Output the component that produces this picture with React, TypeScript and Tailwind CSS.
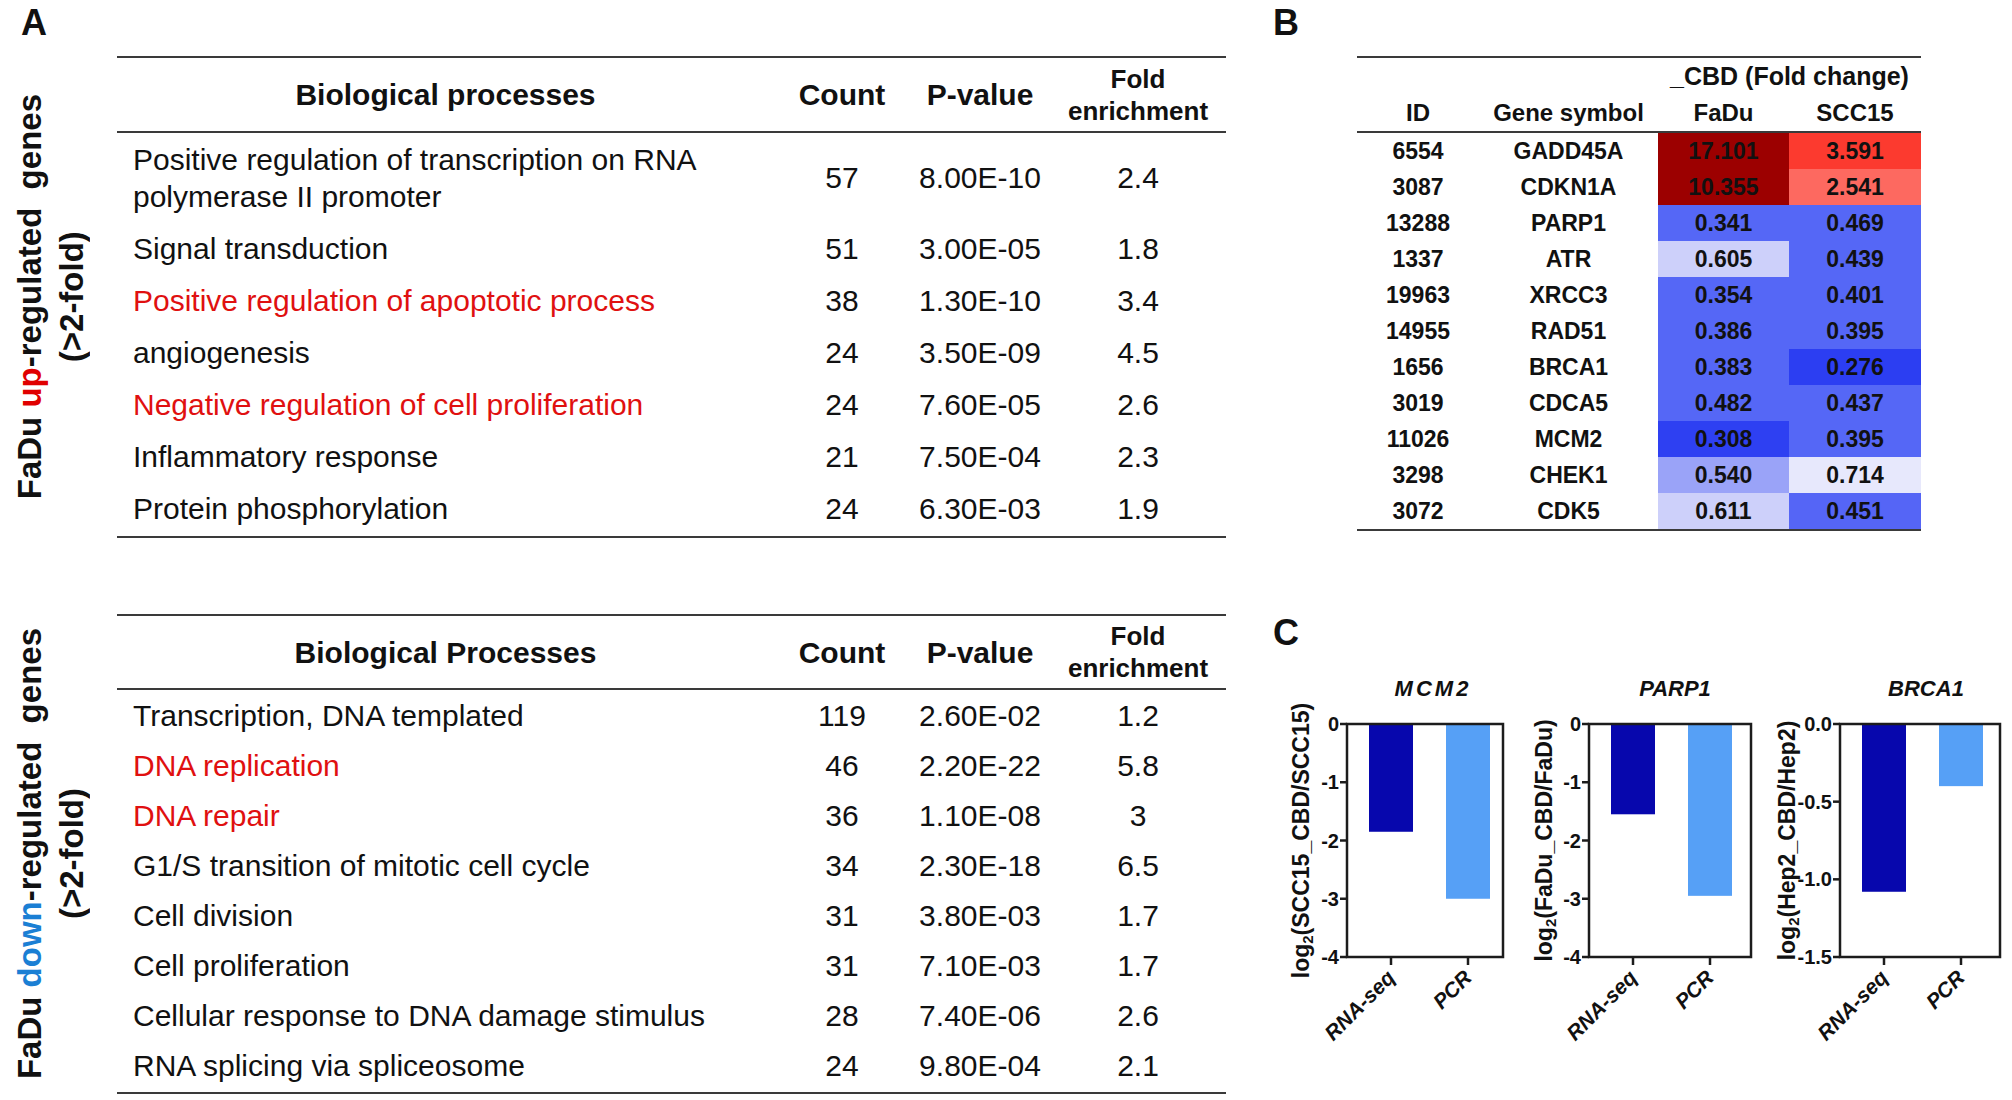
import React from "react";

type GoRow = { name: string[]; count: string; p: string; fold: string; red?: boolean };

const upRows: GoRow[] = [
  { name: ["Positive regulation of transcription on RNA", "polymerase II promoter"], count: "57", p: "8.00E-10", fold: "2.4" },
  { name: ["Signal transduction"], count: "51", p: "3.00E-05", fold: "1.8" },
  { name: ["Positive regulation of apoptotic process"], count: "38", p: "1.30E-10", fold: "3.4", red: true },
  { name: ["angiogenesis"], count: "24", p: "3.50E-09", fold: "4.5" },
  { name: ["Negative regulation of cell proliferation"], count: "24", p: "7.60E-05", fold: "2.6", red: true },
  { name: ["Inflammatory response"], count: "21", p: "7.50E-04", fold: "2.3" },
  { name: ["Protein phosphorylation"], count: "24", p: "6.30E-03", fold: "1.9" },
];

const downRows: GoRow[] = [
  { name: ["Transcription, DNA templated"], count: "119", p: "2.60E-02", fold: "1.2" },
  { name: ["DNA replication"], count: "46", p: "2.20E-22", fold: "5.8", red: true },
  { name: ["DNA repair"], count: "36", p: "1.10E-08", fold: "3", red: true },
  { name: ["G1/S transition of mitotic cell cycle"], count: "34", p: "2.30E-18", fold: "6.5" },
  { name: ["Cell division"], count: "31", p: "3.80E-03", fold: "1.7" },
  { name: ["Cell proliferation"], count: "31", p: "7.10E-03", fold: "1.7" },
  { name: ["Cellular response to DNA damage stimulus"], count: "28", p: "7.40E-06", fold: "2.6" },
  { name: ["RNA splicing via spliceosome"], count: "24", p: "9.80E-04", fold: "2.1" },
];

const heatRows = [
  ["6554", "GADD45A", "17.101", "bg-[#9c0000]", "3.591", "bg-[#fc3a2f]"],
  ["3087", "CDKN1A", "10.355", "bg-[#9c0000]", "2.541", "bg-[#fd6960]"],
  ["13288", "PARP1", "0.341", "bg-[#5567f6]", "0.469", "bg-[#5567f6]"],
  ["1337", "ATR", "0.605", "bg-[#cdd0fa]", "0.439", "bg-[#5567f6]"],
  ["19963", "XRCC3", "0.354", "bg-[#5567f6]", "0.401", "bg-[#5567f6]"],
  ["14955", "RAD51", "0.386", "bg-[#5567f6]", "0.395", "bg-[#5567f6]"],
  ["1656", "BRCA1", "0.383", "bg-[#5567f6]", "0.276", "bg-[#2c3ef2]"],
  ["3019", "CDCA5", "0.482", "bg-[#5567f6]", "0.437", "bg-[#5567f6]"],
  ["11026", "MCM2", "0.308", "bg-[#2e40f2]", "0.395", "bg-[#5567f6]"],
  ["3298", "CHEK1", "0.540", "bg-[#9aa3f8]", "0.714", "bg-[#e7e8fc]"],
  ["3072", "CDK5", "0.611", "bg-[#cdd0fa]", "0.451", "bg-[#5565f6]"],
];

function SideLabel({ word, color }: { word: string; color: string }) {
  return (
    <div className="w-[117px] flex items-center">
      <div className="ml-[9px] [writing-mode:vertical-rl] rotate-180 text-center text-[33px] leading-[42px] font-bold whitespace-pre">
        {"FaDu "}
        <span className={color}>{word}</span>
        {"-regulated  genes"}
        <br />
        {"(>2-fold)"}
      </div>
    </div>
  );
}

function GoTable({ title, rows, headH, rowH, firstH }: { title: string; rows: GoRow[]; headH: string; rowH: string; firstH: string }) {
  const cols = "grid grid-cols-[673px_104px_172px_144px_16px]";
  return (
    <div className="w-[1109px] border-y-2 border-[#3a3a3a]">
      <div className={`${cols} ${headH} border-b-2 border-[#3a3a3a] font-bold`}>
        <div className="flex items-center justify-center pr-[16px] text-[30px]">{title}</div>
        <div className="flex items-center justify-center text-[30px]">Count</div>
        <div className="flex items-center justify-center text-[30px]">P-value</div>
        <div className="flex flex-col items-center justify-center text-[26px] leading-[32px]">
          <span>Fold</span>
          <span>enrichment</span>
        </div>
      </div>
      {rows.map((r, i) => (
        <div key={i} className={`${cols} ${i === 0 ? firstH : rowH} text-[30px]`}>
          <div className={`flex flex-col justify-center pl-[16px] leading-[37px] ${r.red ? "text-[#e01010]" : ""}`}>
            {r.name.map((n) => (
              <span key={n}>{n}</span>
            ))}
          </div>
          <div className="flex items-center justify-center">{r.count}</div>
          <div className="flex items-center justify-center">{r.p}</div>
          <div className="flex items-center justify-center">{r.fold}</div>
        </div>
      ))}
    </div>
  );
}

type ChartProps = {
  x: number;
  w: number;
  title: string;
  spaced?: boolean;
  yLabel: string;
  labelX: number;
  ticks: [number, string][];
  min: number;
  values: number[];
};

function Chart({ x, w, title, spaced, yLabel, labelX, ticks, min, values }: ChartProps) {
  const T = 74;
  const B = 307;
  const H = B - T;
  const y = (v: number) => T + (v / min) * H;
  const bars = [
    { x: 22, c: "#0707ad", label: "RNA-seq" },
    { x: 99, c: "#56a0f6", label: "PCR" },
  ];
  return (
    <g transform={`translate(${x},0)`}>
      <text x={86} y={38} textAnchor="middle" dominantBaseline="central" fontSize={22} fontWeight={700} fontStyle="italic" letterSpacing={spaced ? 3 : 0}>
        {title}
      </text>
      {bars.map((b, i) => (
        <rect key={b.label} x={b.x} y={T} width={44} height={y(values[i]) - T} fill={b.c} />
      ))}
      <rect x={0} y={T} width={w} height={H} fill="none" stroke="#1c1c1c" strokeWidth={2.5} />
      {ticks.map(([v, t]) => (
        <g key={t}>
          <line x1={-7} x2={0} y1={y(v)} y2={y(v)} stroke="#1c1c1c" strokeWidth={2.5} />
          <text x={-8} y={y(v)} textAnchor="end" dominantBaseline="central" fontSize={20} fontWeight={700}>
            {t}
          </text>
        </g>
      ))}
      {bars.map((b) => (
        <g key={b.label}>
          <line x1={b.x + 22} x2={b.x + 22} y1={B} y2={B + 8} stroke="#1c1c1c" strokeWidth={2.5} />
          <text
            transform={`translate(${b.x + 27},${B + 22}) rotate(-45)`}
            textAnchor="end"
            fontSize={21}
            fontWeight={700}
            fontStyle="italic"
          >
            {b.label}
          </text>
        </g>
      ))}
      <text
        transform={`translate(${labelX},${(T + B) / 2}) rotate(-90)`}
        textAnchor="middle"
        dominantBaseline="central"
        fontSize={23}
        fontWeight={700}
      >
        log
        <tspan fontSize={15} dy={6}>
          2
        </tspan>
        <tspan dy={-6}>({yLabel})</tspan>
      </text>
    </g>
  );
}

export default function App() {
  return (
    <div className="w-[2012px] h-[1100px] bg-white flex overflow-hidden font-['Liberation_Sans',Arial,sans-serif] text-[#111]">
      <div className="w-[1250px] flex flex-col">
        <div className="h-[56px] pl-[21px] pt-[5px] text-[36px] leading-[36px] font-bold">A</div>
        <div className="flex h-[482px]">
          <SideLabel word="up" color="text-[#e00000]" />
          <GoTable title="Biological processes" rows={upRows} headH="h-[75px]" firstH="h-[89px]" rowH="h-[52px]" />
        </div>
        <div className="h-[76px]" />
        <div className="flex h-[480px]">
          <SideLabel word="down" color="text-[#1b7fd4]" />
          <GoTable title="Biological Processes" rows={downRows} headH="h-[74px]" firstH="h-[50px]" rowH="h-[50px]" />
        </div>
      </div>

      <div className="w-[762px] flex flex-col">
        <div className="h-[56px] pl-[23px] pt-[5px] text-[36px] leading-[36px] font-bold">B</div>
        <div className="ml-[107px] w-[564px] border-y-2 border-[#3a3a3a] font-bold">
          <div className="border-b-2 border-[#3a3a3a]">
            <div className="h-[37px] grid grid-cols-[122px_179px_263px]">
              <div />
              <div />
              <div className="flex items-center justify-center text-[25px]">_CBD (Fold change)</div>
            </div>
            <div className="h-[36px] grid grid-cols-[122px_179px_131px_132px] text-[24px]">
              <div className="flex items-center justify-center">ID</div>
              <div className="flex items-center justify-center">Gene symbol</div>
              <div className="flex items-center justify-center">FaDu</div>
              <div className="flex items-center justify-center">SCC15</div>
            </div>
          </div>
          {heatRows.map(([id, gene, fa, faBg, sc, scBg]) => (
            <div key={id} className="h-[36px] grid grid-cols-[122px_179px_131px_132px] text-[23px]">
              <div className="flex items-center justify-center">{id}</div>
              <div className="flex items-center justify-center">{gene}</div>
              <div className={`flex items-center justify-center ${faBg}`}>{fa}</div>
              <div className={`flex items-center justify-center ${scBg}`}>{sc}</div>
            </div>
          ))}
        </div>
        <div className="h-[119px] pl-[23px] pt-[84px] text-[36px] leading-[36px] font-bold">C</div>
        <svg width={762} height={450} className="block font-['Liberation_Sans',Arial,sans-serif]" fill="#111">
          <Chart
            x={97}
            w={156}
            title="MCM2"
            spaced
            yLabel="SCC15_CBD/SCC15"
            labelX={-46}
            ticks={[[0, "0"], [-1, "-1"], [-2, "-2"], [-3, "-3"], [-4, "-4"]]}
            min={-4}
            values={[-1.85, -3]}
          />
          <Chart
            x={339}
            w={162}
            title="PARP1"
            yLabel="FaDu_CBD/FaDu"
            labelX={-45}
            ticks={[[0, "0"], [-1, "-1"], [-2, "-2"], [-3, "-3"], [-4, "-4"]]}
            min={-4}
            values={[-1.55, -2.95]}
          />
          <Chart
            x={590}
            w={160}
            title="BRCA1"
            yLabel="Hep2_CBD/Hep2"
            labelX={-53}
            ticks={[[0, "0.0"], [-0.5, "-0.5"], [-1, "-1.0"], [-1.5, "-1.5"]]}
            min={-1.5}
            values={[-1.08, -0.4]}
          />
        </svg>
      </div>
    </div>
  );
}
